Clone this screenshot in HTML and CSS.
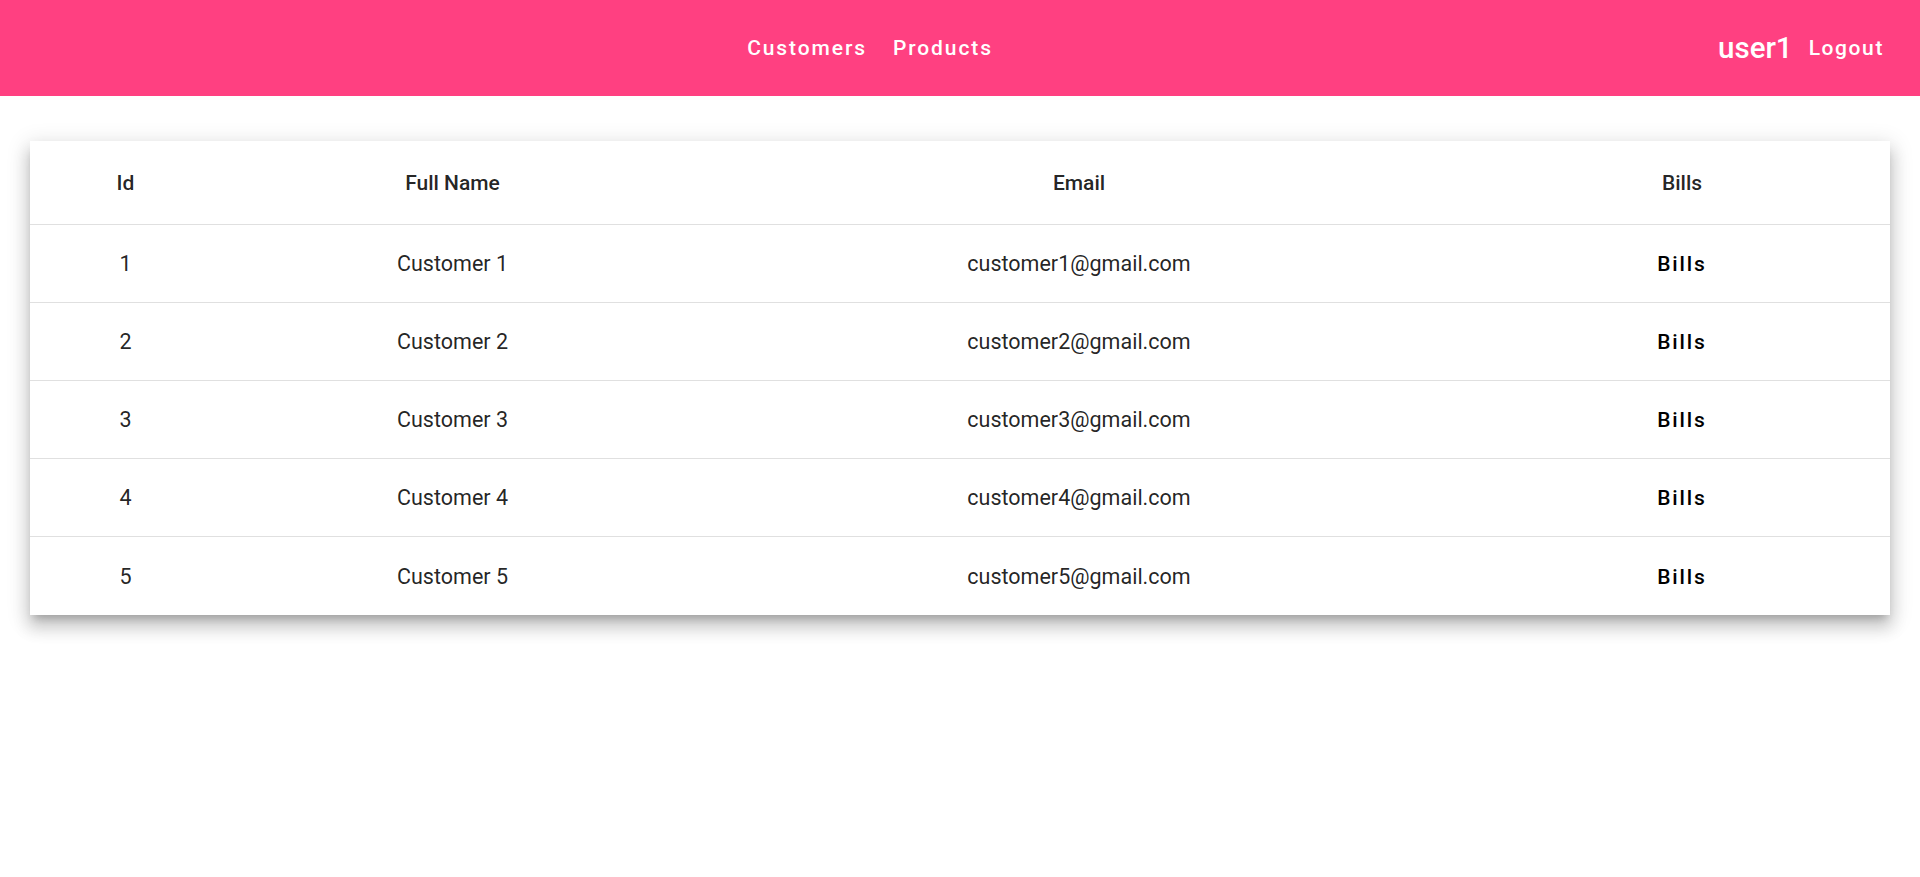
FILE: index.html
```html
<!DOCTYPE html>
<html lang="en">
<head>
<meta charset="utf-8">
<title>Customers</title>
<link rel="stylesheet" href="styles.css">
</head>
<body>
<header class="toolbar">
  <span class="spacer"></span>
  <nav class="nav">
    <a class="nav-btn">Customers</a>
    <a class="nav-btn">Products</a>
  </nav>
  <span class="spacer"></span>
  <div class="user">
    <span class="username">user1</span>
    <a class="nav-btn logout">Logout</a>
  </div>
</header>
<main class="content">
  <table class="data-table">
    <colgroup>
      <col class="c-id"><col class="c-name"><col class="c-email"><col class="c-bills">
    </colgroup>
    <thead>
      <tr><th>Id</th><th>Full Name</th><th>Email</th><th>Bills</th></tr>
    </thead>
    <tbody>
      <tr><td>1</td><td>Customer 1</td><td>customer1@gmail.com</td><td><a class="bills-btn">Bills</a></td></tr>
      <tr><td>2</td><td>Customer 2</td><td>customer2@gmail.com</td><td><a class="bills-btn">Bills</a></td></tr>
      <tr><td>3</td><td>Customer 3</td><td>customer3@gmail.com</td><td><a class="bills-btn">Bills</a></td></tr>
      <tr><td>4</td><td>Customer 4</td><td>customer4@gmail.com</td><td><a class="bills-btn">Bills</a></td></tr>
      <tr><td>5</td><td>Customer 5</td><td>customer5@gmail.com</td><td><a class="bills-btn">Bills</a></td></tr>
    </tbody>
  </table>
</main>
</body>
</html>
```
FILE: styles.css
```css
html, body {
  margin: 0;
  padding: 0;
  background: #fff;
  font-family: Roboto, "Liberation Sans", sans-serif;
}

.toolbar {
  height: 96px;
  background: #ff4081;
  color: #fff;
  display: flex;
  align-items: center;
  padding: 0 24px;
  box-sizing: border-box;
}

.spacer {
  flex: 1 1 auto;
}

.nav {
  display: flex;
  align-items: center;
  gap: 2px;
}

.nav-btn {
  display: inline-flex;
  align-items: center;
  height: 54px;
  padding: 0 12px;
  font-size: 21px;
  font-weight: 500;
  letter-spacing: 1.9px;
  color: #fff;
  cursor: pointer;
}

.user {
  display: flex;
  align-items: center;
}

.username {
  font-size: 29.5px;
  font-weight: 500;
  padding: 0 2px;
}

.logout {
  padding: 0 12px 0 14px;
  letter-spacing: 1.6px;
}

.content {
  padding: 45px 30px;
}

.data-table {
  width: 100%;
  border-collapse: collapse;
  table-layout: fixed;
  background: #fff;
  box-shadow: 0 7px 8px -4px rgba(0,0,0,.2), 0 12px 15px 2px rgba(0,0,0,.14), 0 5px 21px 3px rgba(0,0,0,.12);
}

.c-id { width: 191px; }
.c-name { width: 463px; }
.c-email { width: 790px; }

.data-table th,
.data-table td {
  text-align: center;
  padding: 0;
  color: rgba(0,0,0,.87);
  font-size: 21px;
  border-bottom: 1px solid #e0e0e0;
}

.data-table th {
  height: 83px;
  font-weight: 500;
}

.data-table td {
  height: 77px;
  font-size: 21.5px;
  font-weight: 400;
}

.data-table tbody tr:last-child td {
  border-bottom: none;
  height: 78px;
}

.bills-btn {
  font-size: 21px;
  font-weight: 500;
  letter-spacing: 1.9px;
  color: #000;
  cursor: pointer;
}
```
